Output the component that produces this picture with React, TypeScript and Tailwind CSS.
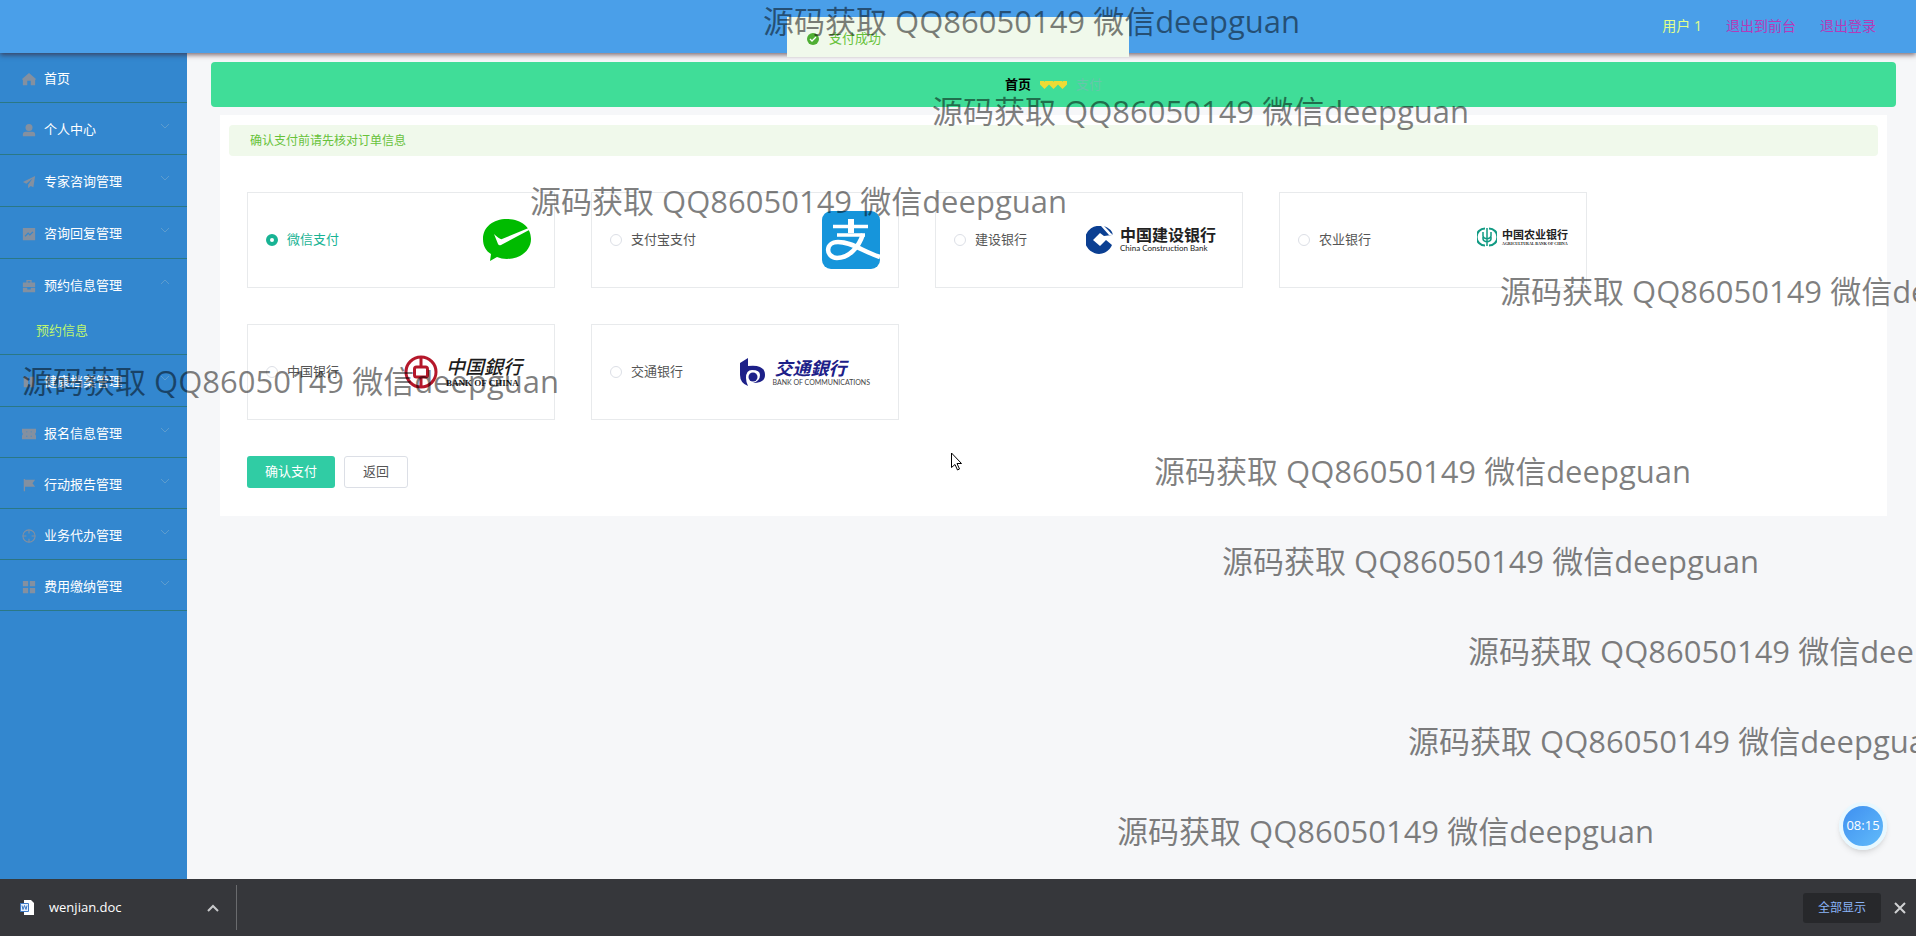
import { useState } from "react";
import type { ReactNode } from "react";

type MenuItem = { label: string; icon: ReactNode; height: string; arrow: boolean; children?: string[] };

const icons = {
  home: <path d="M8 1 0 8l1 1v6h5v-5h4v5h5V9l1-1z" />,
  user: (
    <>
      <circle cx="8" cy="5" r="4" />
      <path d="M1 15v-2q0-3 3-3h8q3 0 3 3v2z" />
    </>
  ),
  plane: <path d="M15 1 1 8l4 2 7-6-5 7v4l3-2.500 3 1.500z" />,
  chart: <path fillRule="evenodd" d="M1 1h14v14H1zM3 10l1 1 3-3 2 2 4-4-1-1-3 3-2-2z" />,
  briefcase: <path fillRule="evenodd" d="M5 4V1h6v3h4v5H1V4zm1.500 0h3V2.500h-3zM1 10h5v2h4v-2h5v5H1z" />,
  bookmark: <path d="M2 2h5v12H2zM9 2h5v12H9z" />,
  ticket: <path fillRule="evenodd" d="M0 2h16v4q-2 2 0 4v4H0v-4q2-2 0-4zM5 5v1h1V5zm0 5v1h1v-1zm5-5v1h1V5zm0 5v1h1v-1z" />,
  flag: <path d="M2 1h1.500v1H15l-3 4L15 10H3.500v5H2z" />,
  target: (
    <g fill="none" stroke="currentColor" strokeWidth="1.200">
      <circle cx="8" cy="8" r="7" />
      <path d="M8 1v4M8 11v4M1 8h4M11 8h4" />
    </g>
  ),
  grid: <path d="M1 1h6v6H1zM9 1h6v6H9zM1 9h6v6H1zM9 9h6v6H9z" />,
};

const menu: MenuItem[] = [
  { label: "首页", icon: icons.home, height: "h-[50px]", arrow: false },
  { label: "个人中心", icon: icons.user, height: "h-[52px]", arrow: true },
  { label: "专家咨询管理", icon: icons.plane, height: "h-[52px]", arrow: true },
  { label: "咨询回复管理", icon: icons.chart, height: "h-[52px]", arrow: true },
  { label: "预约信息管理", icon: icons.briefcase, height: "h-[52px]", arrow: true, children: ["预约信息"] },
  { label: "健康档案管理", icon: icons.bookmark, height: "h-[52px]", arrow: true },
  { label: "报名信息管理", icon: icons.ticket, height: "h-[51px]", arrow: true },
  { label: "行动报告管理", icon: icons.flag, height: "h-[51px]", arrow: true },
  { label: "业务代办管理", icon: icons.target, height: "h-[51px]", arrow: true },
  { label: "费用缴纳管理", icon: icons.grid, height: "h-[51px]", arrow: true },
];

function Sidebar() {
  return (
    <nav className="w-[187px] shrink-0 bg-[#3387cf] text-[13px] text-white">
      <ul>
        {menu.map((item) => (
          <li key={item.label} className="border-b border-[#2b7885]">
            <a href="#" className={`${item.height} -mb-px flex items-center pt-[2px] pr-4 pl-[22px]`}>
              <svg viewBox="0 0 16 16" className="mr-2 h-[14px] w-[14px] fill-current text-[#8490a0]">
                {item.icon}
              </svg>
              <span className="flex-1">{item.label}</span>
              {item.arrow && (
                <svg viewBox="0 0 12 12" className="mb-2 h-3 w-3 fill-none stroke-[#5d9cce]">
                  <path d={item.children ? "M2 8l4-4 4 4" : "M2 4l4 4 4-4"} />
                </svg>
              )}
            </a>
            {item.children?.map((child) => (
              <a key={child} href="#" className="flex h-11 items-center pb-[2px] pl-9 text-[#bdf56f]">
                {child}
              </a>
            ))}
          </li>
        ))}
      </ul>
    </nav>
  );
}

function WechatLogo() {
  return (
    <svg viewBox="0 0 50 44" className="mr-[22px] h-11 w-[50px]">
      <path fill="#0b0" d="M25 1C11 1 1 9 1 21c0 7 3 12 8 15l-1 7 7-4c3 1 6 2 10 2 14 0 24-9 24-20C49 9 39 1 25 1z" />
      <path fill="#fff" d="M12 16q6 6 8 5L49 9v2L19 27q-2 1-3-1z" />
    </svg>
  );
}

function AlipayLogo() {
  return (
    <svg viewBox="0 0 58 58" className="mr-[18px] h-[58px] w-[58px]">
      <rect width="58" height="58" rx="9" fill="#1695db" />
      <g fill="none" stroke="#fff" strokeWidth="4">
        <path d="M29 8v13M11 15.500h35M15 24h28" strokeWidth="3.500" />
        <path d="M29 8v14" strokeWidth="6" />
        <path d="M41 23C37 36 27 47 15 47 3 46 3 31 16 31c14 0 24 9 42 15" strokeWidth="4.500" />
      </g>
    </svg>
  );
}

function CcbLogo() {
  return (
    <span className="mr-[26px] flex items-center gap-[6px]">
      <svg viewBox="0 0 28 28" className="h-7 w-7">
        <path fill="#0b3f92" fillRule="evenodd" d="M15 0A14 14 0 1 0 26 19l-6-5-6 6-7-6 7-7 4 3 8-1A14 14 0 0 0 22 3l4 6-3 0-8-9z" />
        <path fill="#0b3f92" d="M18 0q8 3 9 9z" />
      </svg>
      <span className="flex flex-col text-[#222]">
        <span className="text-[16px] leading-4 font-bold">中国建设银行</span>
        <span className="font-['Lato'] text-[8px] leading-[10px]">China Construction Bank</span>
      </span>
    </span>
  );
}

function AbcLogo() {
  return (
    <span className="mr-[18px] flex items-center gap-[5px] pb-[6px]">
      <svg viewBox="0 0 20 20" className="h-5 w-5 fill-none stroke-[#119a83]">
        <path strokeWidth="2.200" d="M8 1.500a8.500 8.500 0 0 0 0 17M12 1.500a8.500 8.500 0 0 1 0 17" />
        <path strokeWidth="1.500" d="M10 1v18M6 5v4q0 2 4 3 4-1 4-3V5M6 10v2q0 2 4 3 4-1 4-3v-2" />
      </svg>
      <span className="flex flex-col text-[#222]">
        <span className="text-[11px] leading-[13px] font-bold">中国农业银行</span>
        <span className="font-['Liberation_Serif'] text-[4px] leading-[5px] font-bold">AGRICULTURAL BANK OF CHINA</span>
      </span>
    </span>
  );
}

function BocLogo() {
  return (
    <span className="mr-8 flex items-center gap-2">
      <svg viewBox="0 0 34 34" className="h-[34px] w-[34px] fill-none stroke-[#b5182b]">
        <circle cx="17" cy="17" r="15" strokeWidth="3" />
        <rect x="10.500" y="12" width="13" height="10" rx="2" strokeWidth="3" />
        <path strokeWidth="3" d="M17 2v9M17 23v9" />
      </svg>
      <span className="flex flex-col text-[#1c1c1c]">
        <span className="text-[19px] leading-[22px] font-medium italic">中国銀行</span>
        <span className="font-['Liberation_Serif'] text-[9px] leading-[10px] font-bold">BANK OF CHINA</span>
      </span>
    </span>
  );
}

function BocomLogo() {
  return (
    <span className="mr-7 flex items-center gap-[6px]">
      <svg viewBox="0 0 27 28" className="h-7 w-[27px]">
        <path fill="#1d2088" d="M1 5 9 0v8q17-2 17 9 0 8-12 8 7-2 7-8 0-5-8-5-6 0-6 8 0 4 2 8Q1 25 1 17z" />
        <circle cx="14" cy="19" r="4.500" fill="#1d2088" />
      </svg>
      <span className="flex flex-col">
        <span className="pl-[2px] text-[18px] leading-5 font-bold text-[#1d2088] italic">交通銀行</span>
        <span className="font-['Lato'] text-[7px] leading-2 text-[#444]">BANK OF COMMUNICATIONS</span>
      </span>
    </span>
  );
}

const methods = [
  { name: "微信支付", logo: <WechatLogo /> },
  { name: "支付宝支付", logo: <AlipayLogo /> },
  { name: "建设银行", logo: <CcbLogo /> },
  { name: "农业银行", logo: <AbcLogo /> },
  { name: "中国银行", logo: <BocLogo /> },
  { name: "交通银行", logo: <BocomLogo /> },
];

function PaymentForm() {
  const [selected, setSelected] = useState("微信支付");
  return (
    <form className="mx-[9px] mt-2 bg-white px-[9px] pt-[10px] pb-7 text-[13px]" onSubmit={(e) => e.preventDefault()}>
      <p className="flex h-[31px] items-center rounded-sm bg-[#f0f9eb] px-[21px] text-[12px] text-[#67c23a]">确认支付前请先核对订单信息</p>
      <div className="mt-9 flex flex-wrap gap-9 px-[18px]">
        {methods.map((m) => (
          <label key={m.name} className="flex h-24 w-[308px] items-center border border-[#e8eaec] pl-[18px] text-[#555]">
            <input
              type="radio"
              name="payment"
              checked={selected === m.name}
              onChange={() => setSelected(m.name)}
              className="h-3 w-3 appearance-none rounded-full border border-[#dcdfe6] bg-white checked:border-4 checked:border-[#18b394]"
            />
            <span className={selected === m.name ? "ml-[9px] text-[#18b394]" : "ml-[9px]"}>{m.name}</span>
            <span className="ml-auto">{m.logo}</span>
          </label>
        ))}
      </div>
      <div className="mt-9 flex gap-[9px] px-[18px]">
        <button type="submit" className="h-8 rounded-[3px] bg-[#30cca4] px-[18px] text-white">确认支付</button>
        <button type="button" className="h-8 rounded-[3px] border border-[#dcdfe6] bg-white px-[18px] text-[#555]">返回</button>
      </div>
    </form>
  );
}

const marks = [
  "left-[763px] top-0",
  "left-[932px] top-[90px]",
  "left-[530px] top-[180px]",
  "left-[1500px] top-[270px]",
  "left-[22px] top-[360px]",
  "left-[1154px] top-[450px]",
  "left-[1222px] top-[540px]",
  "left-[1468px] top-[630px]",
  "left-[1408px] top-[720px]",
  "left-[1117px] top-[810px]",
];

export default function App() {
  return (
    <div className="relative flex h-screen flex-col overflow-hidden bg-[#f6f7f9] font-['Open_Sans','Noto_Sans_CJK_SC',sans-serif]">
      <header className="z-10 flex h-[53px] shrink-0 items-center justify-end gap-6 bg-[#4a9fe9] pr-10 pb-[2px] text-[14px] text-[#b53bb8] shadow-[0_2px_5px_rgba(60,30,40,0.65)]">
        <span className="text-[#e3ff8a]">用户 1</span>
        <a href="#">退出到前台</a>
        <a href="#">退出登录</a>
      </header>

      <div className="flex min-h-0 flex-1">
        <Sidebar />
        <main className="flex-1 pt-[9px] pr-5 pl-6">
          <div className="flex h-[45px] items-center justify-center gap-[9px] rounded bg-[#40dd98] text-[13px]">
            <a href="#" className="font-bold text-black">首页</a>
            <svg viewBox="0 0 27 8" className="h-2 w-[27px] fill-[#eedb35]">
              <path d="M4.500 8 0 3.500V0h9v3.500zM13.500 8 9 3.500V0h9v3.500zM22.500 8 18 3.500V0h9v3.500z" />
              <path d="M4 0h1l-.5 1zM13 0h1l-.5 1zM22 0h1l-.5 1z" fill="#40dd98" />
            </svg>
            <span className="text-[#66c6ab]">支付</span>
          </div>
          <PaymentForm />
        </main>
      </div>

      <footer className="flex h-[57px] shrink-0 items-center bg-[#36373b] text-[13px] text-white">
        <div className="flex h-[45px] w-[237px] items-center border-r border-[#6a6b6e] pr-[17px] pl-5">
          <svg viewBox="0 0 14 16" className="h-4 w-[14px]">
            <path fill="#fff" d="M4 0h7l3 3v12H4z" />
            <path fill="#e8f1fc" stroke="#3d79c6" d="M.500 3.500h8v8h-8z" />
            <path fill="none" stroke="#3d79c6" d="M2 5.500l1 4 1.500-4 1.500 4 1-4" />
          </svg>
          <span className="ml-[15px] flex-1 text-[13px]">wenjian.doc</span>
          <button type="button" aria-label="下载选项">
            <svg viewBox="0 0 12 12" className="h-3 w-3 fill-none stroke-[#c8c9cb] stroke-2">
              <path d="M1 9l5-5 5 5" />
            </svg>
          </button>
        </div>
        <button type="button" className="ml-auto h-[30px] rounded-[3px] bg-[#27282b] px-[15px] text-[12px] text-[#8ab4f8]">全部显示</button>
        <button type="button" aria-label="关闭" className="mr-[10px] ml-[13px]">
          <svg viewBox="0 0 12 12" className="h-3 w-3 fill-none stroke-[#d0d1d3] stroke-2">
            <path d="M1 1l10 10M11 1 1 11" />
          </svg>
        </button>
      </footer>

      <div role="status" className="absolute top-[17px] left-1/2 z-20 flex h-10 w-[342px] -translate-x-1/2 items-center gap-[10px] bg-[#f0f9eb] pt-1 pl-5 text-[13px] text-[#67c23a]">
        <svg viewBox="0 0 12 12" className="h-3 w-3">
          <circle cx="6" cy="6" r="6" fill="#4fae33" />
          <path d="M3 6l2 2 4-4" fill="none" stroke="#fff" strokeWidth="1.300" />
        </svg>
        支付成功
      </div>

      <div className="absolute right-[29px] bottom-[86px] flex h-12 w-12 items-center justify-center rounded-full border-4 border-[#e8f8ff] bg-linear-to-br from-[#3f8ff0] to-[#62bbfa] text-[13px] text-white shadow-md">
        08:15
      </div>

      <svg viewBox="0 0 12 19" className="absolute top-[452px] left-[951px] h-[19px] w-3 fill-white stroke-black">
        <path d="M.500 1v14.500l3.500-3 2.500 5.500 2-1-2.500-5.500h4.500z" />
      </svg>

      <div className="pointer-events-none absolute inset-0 z-30 overflow-hidden text-[31px] leading-[42px] whitespace-nowrap text-black/50">
        {marks.map((place) => (
          <span key={place} className={`absolute ${place}`}>源码获取 QQ86050149 微信deepguan</span>
        ))}
      </div>
    </div>
  );
}
